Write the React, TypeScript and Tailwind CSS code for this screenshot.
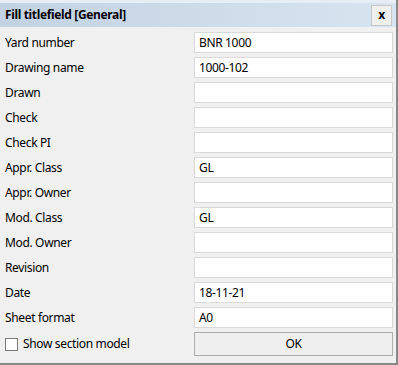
const ROWS: { label: string; value: string }[] = [
  { label: "Yard number", value: "BNR 1000" },
  { label: "Drawing name", value: "1000-102" },
  { label: "Drawn", value: "" },
  { label: "Check", value: "" },
  { label: "Check PI", value: "" },
  { label: "Appr. Class", value: "GL" },
  { label: "Appr. Owner", value: "" },
  { label: "Mod. Class", value: "GL" },
  { label: "Mod. Owner", value: "" },
  { label: "Revision", value: "" },
  { label: "Date", value: "18-11-21" },
  { label: "Sheet format", value: "A0" },
];

export default function App() {
  return (
    <div
      className="flex h-[365px] w-[398px] flex-col border-r-2 border-b-2 border-[#888888] bg-[#f0f0f0] text-[12px] tracking-[-0.35px] text-black"
      style={{ fontFamily: '"Noto Sans", "Open Sans", sans-serif' }}
    >
      <div className="h-[3px] bg-[#e6edf4]" />
      <div className="flex h-[24px] items-center justify-between bg-gradient-to-r from-[#c3d2e2] to-[#d8e4f0] pl-[5px] pr-[4px]">
        <span className="font-bold">Fill titlefield [General]</span>
        <button className="flex h-[21px] w-[21px] items-center justify-center border border-[#c8c8c8] bg-[#efefef] text-[12px] font-bold leading-none">
          x
        </button>
      </div>
      <div className="flex flex-col gap-[4px] pt-[5px] pl-[5px] pr-[3px]">
        {ROWS.map((row) => (
          <div key={row.label} className="flex h-[21px] items-center">
            <span className="w-[189px] shrink-0">{row.label}</span>
            <div className="flex h-[21px] flex-1 items-center border border-[#d9d9d9] bg-white pl-[4px]">
              {row.value}
            </div>
          </div>
        ))}
        <div className="flex h-[24px] items-center">
          <div className="flex w-[189px] shrink-0 items-center gap-[5px]">
            <span className="h-[13px] w-[13px] border border-[#7a7a7a] bg-white" />
            <span>Show section model</span>
          </div>
          <button className="h-[24px] flex-1 border border-[#adadad] bg-[#efefef] text-[12px]">
            OK
          </button>
        </div>
      </div>
    </div>
  );
}
